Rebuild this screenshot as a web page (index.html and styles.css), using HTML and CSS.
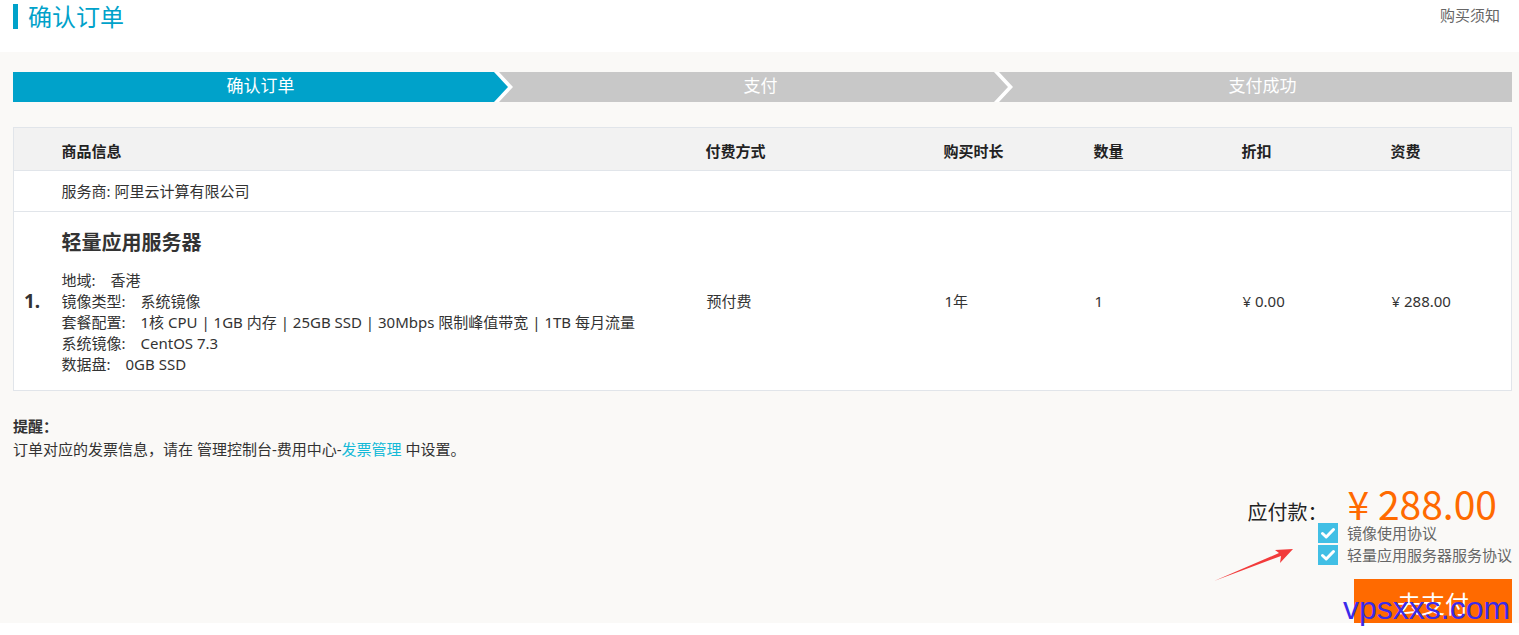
FILE: index.html
```html
<!DOCTYPE html>
<html lang="zh-CN">
<head>
    <meta charset="UTF-8">
    <title>确认订单</title>
    <link rel="stylesheet" href="styles.css">
</head>
<body>
    <div class="page">
        <header class="top">
            <h1 class="title">确认订单</h1>
            <a class="notice" href="#">购买须知</a>
        </header>

        <main class="main">
            <div class="steps">
                <div class="step step-first">确认订单</div>
                <div class="step step-mid">支付</div>
                <div class="step step-last">支付成功</div>
            </div>

            <table class="order">
                <colgroup>
                    <col style="width: 48px">
                    <col style="width: 644px">
                    <col style="width: 238px">
                    <col style="width: 150px">
                    <col style="width: 148px">
                    <col style="width: 149px">
                    <col>
                </colgroup>
                <thead>
                    <tr>
                        <th></th>
                        <th>商品信息</th>
                        <th>付费方式</th>
                        <th>购买时长</th>
                        <th>数量</th>
                        <th>折扣</th>
                        <th>资费</th>
                    </tr>
                </thead>
                <tbody>
                    <tr class="vendor">
                        <td></td>
                        <td colspan="6">服务商: 阿里云计算有限公司</td>
                    </tr>
                    <tr class="item">
                        <td class="num">1.</td>
                        <td class="info">
                            <div class="item-name">轻量应用服务器</div>
                            <div class="spec"><span class="spec-key">地域:</span>香港</div>
                            <div class="spec"><span class="spec-key">镜像类型:</span>系统镜像</div>
                            <div class="spec"><span class="spec-key">套餐配置:</span>1核 CPU | 1GB 内存 | 25GB SSD | 30Mbps 限制峰值带宽 | 1TB 每月流量</div>
                            <div class="spec"><span class="spec-key">系统镜像:</span>CentOS 7.3</div>
                            <div class="spec"><span class="spec-key">数据盘:</span>0GB SSD</div>
                        </td>
                        <td class="val">预付费</td>
                        <td class="val">1年</td>
                        <td class="val">1</td>
                        <td class="val">¥ 0.00</td>
                        <td class="val">¥ 288.00</td>
                    </tr>
                </tbody>
            </table>

            <div class="remind">
                <div class="remind-title">提醒：</div>
                <div>订单对应的发票信息，请在 管理控制台-费用中心-<a href="#">发票管理</a> 中设置。</div>
            </div>

            <div class="checkout">
                <div class="total">
                    <span class="total-label">应付款：</span>
                    <span class="total-price">¥ 288.00</span>
                </div>
                <div class="agrees">
                    <label class="agree">
                        <span class="box">
                            <svg width="20" height="20" viewBox="0 0 20 20"><path d="M4.5 10.5 L8.2 14 L15.5 6.5" fill="none" stroke="#fff" stroke-width="3" stroke-linecap="round" stroke-linejoin="round"/></svg>
                        </span>
                        镜像使用协议
                    </label>
                    <label class="agree">
                        <span class="box">
                            <svg width="20" height="20" viewBox="0 0 20 20"><path d="M4.5 10.5 L8.2 14 L15.5 6.5" fill="none" stroke="#fff" stroke-width="3" stroke-linecap="round" stroke-linejoin="round"/></svg>
                        </span>
                        轻量应用服务器服务协议
                    </label>
                </div>
                <button class="pay">去支付</button>
            </div>

            <!-- annotation arrow -->
            <svg class="arrow" width="86" height="40" viewBox="0 0 86 40">
                <polygon points="4,36 71,11 70,18 83,4 65,5 69,8" fill="#f23b3b"/>
            </svg>
        </main>
    </div>

    <div class="watermark">vpsxxs.com</div>
</body>
</html>
```

FILE: styles.css
```css
body {
    margin: 0;
    background: #fff;
    font-family: "Noto Sans", "Noto Sans CJK SC", sans-serif;
    font-size: 15px;
    color: #333;
}

a { text-decoration: none; }

.page {
    height: 623px;
    overflow: hidden;
}

.top {
    height: 52px;
    display: flex;
    justify-content: space-between;
    align-items: flex-start;
    padding: 0 19px 0 13px;
    background: #fff;
}

.title {
    margin: 4px 0 0;
    padding-left: 10px;
    border-left: 5px solid #00a2ca;
    font-size: 24px;
    line-height: 25px;
    font-weight: normal;
    color: #00a2ca;
}

.notice {
    margin-top: 5px;
    line-height: 20px;
    color: #666;
}

.main {
    position: relative;
    height: 571px;
    padding: 20px 7px 0 13px;
    background: #faf9f7;
}

/* steps */
.steps {
    display: flex;
    height: 30px;
    background: #fff;
}

.step {
    box-sizing: border-box;
    height: 30px;
    line-height: 27px;
    text-align: center;
    font-size: 17px;
    color: #fff;
    background: #c8c8c8;
}

.step-first {
    width: 495px;
    background: #00a2ca;
    clip-path: polygon(0 0, calc(100% - 14px) 0, 100% 50%, calc(100% - 14px) 100%, 0 100%);
}

.step-mid {
    width: 509px;
    margin-left: -9px;
    padding-left: 14px;
    clip-path: polygon(0 0, calc(100% - 14px) 0, 100% 50%, calc(100% - 14px) 100%, 0 100%, 14px 50%);
}

.step-last {
    flex: 1;
    margin-left: -9px;
    padding-left: 14px;
    clip-path: polygon(0 0, 100% 0, 100% 100%, 0 100%, 14px 50%);
}

/* order table */
.order {
    width: 100%;
    margin-top: 25px;
    border-collapse: collapse;
    table-layout: fixed;
    border: 1px solid #e1e5ea;
    background: #fff;
}

.order th {
    box-sizing: border-box;
    height: 43px;
    padding: 3px 0 0;
    line-height: 20px;
    text-align: left;
    font-weight: bold;
    color: #222;
    background: #f2f2f2;
    border-bottom: 1px solid #e1e5ea;
}

.order td {
    padding: 0;
    line-height: 20px;
}

.vendor td {
    height: 40px;
    border-bottom: 1px solid #e1e5ea;
}

.item td {
    vertical-align: middle;
}

.num {
    padding-left: 10px !important;
    font-size: 19px;
    font-weight: bold;
    color: #333;
}

.info {
    padding: 17px 0 15px !important;
}

.item-name {
    margin-bottom: 13px;
    font-size: 20px;
    line-height: 28px;
    font-weight: bold;
}

.spec {
    line-height: 21px;
}

.spec-key {
    margin-right: 15px;
}

.val {
    padding-left: 1px !important;
}

/* reminder */
.remind {
    margin-top: 24px;
    line-height: 23px;
}

.remind-title {
    font-weight: bold;
}

.remind a {
    color: #14b9d7;
}

/* checkout */
.checkout {
    display: flex;
    flex-direction: column;
    align-items: flex-end;
    margin-top: 22px;
}

.total {
    display: flex;
    align-items: baseline;
    margin-right: 15px;
    line-height: 40px;
}

.total-label {
    font-family: "Noto Sans CJK SC", sans-serif;
    font-size: 20px;
    color: #222;
    margin-right: 20px;
}

.total-price {
    font-family: "Noto Sans CJK SC", sans-serif;
    font-size: 39px;
    color: #ff6a00;
}

.agrees {
    margin-top: -10px;
    white-space: nowrap;
}

.agree {
    display: flex;
    align-items: center;
    gap: 9px;
    height: 22px;
    line-height: 22px;
    color: #666;
}

.box {
    width: 20px;
    height: 20px;
    background: #41bfe5;
}

.box svg {
    display: block;
}

.pay {
    width: 158px;
    height: 46px;
    margin-top: 13px;
    border: none;
    background: #ff6a00;
    color: #fff;
    font-family: "Noto Sans CJK SC", sans-serif;
    font-size: 24px;
}

.arrow {
    position: absolute;
    left: 1210px;
    top: 493px;
}

.watermark {
    position: absolute;
    left: 1343px;
    top: 592px;
    font-family: "Liberation Sans", sans-serif;
    font-size: 32px;
    line-height: 32px;
    color: #3b2bea;
}
```
